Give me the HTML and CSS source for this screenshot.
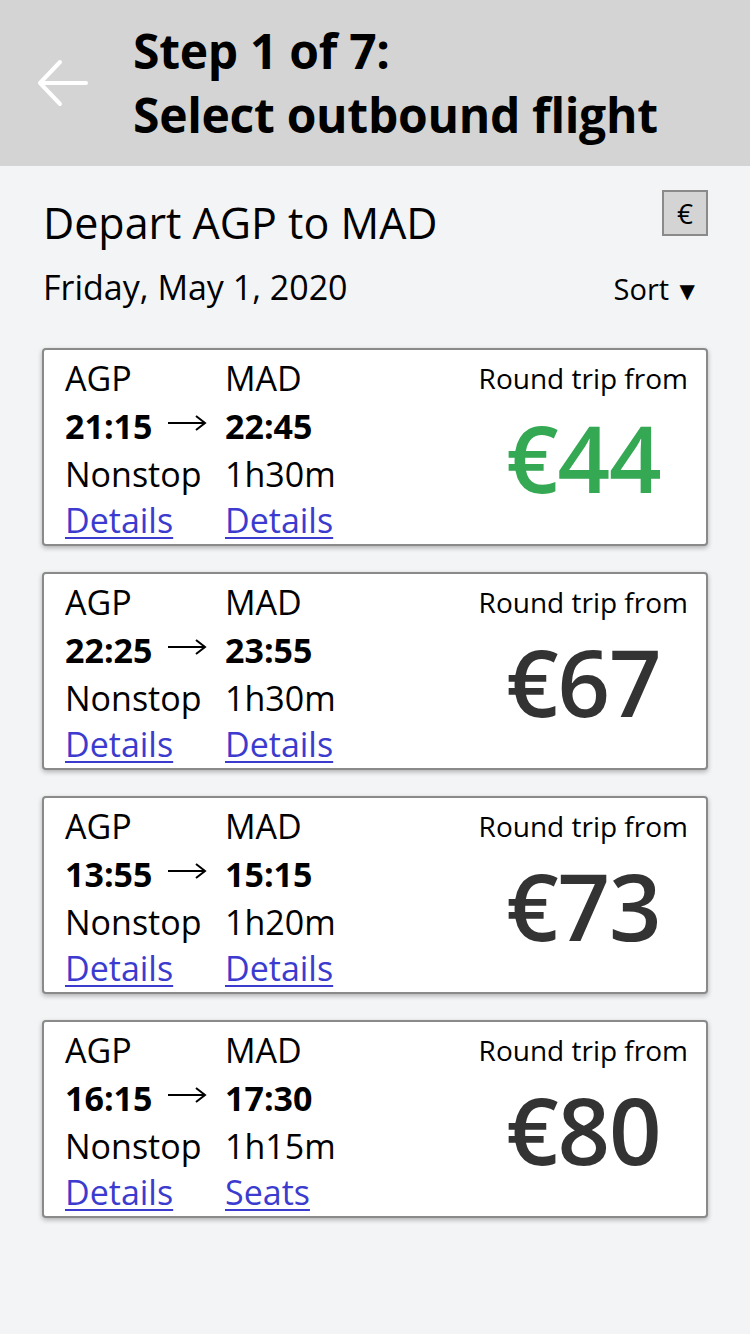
FILE: index.html
```html
<!DOCTYPE html>
<html>
<head>
<meta charset="utf-8">
<link rel="stylesheet" href="styles.css">
</head>
<body>
<header class="topbar">
  <button class="back" aria-label="Back">
    <svg width="54" height="54" viewBox="0 0 54 54"><path d="M50 27H4M24 6L4 27l20 21" fill="none" stroke="#fff" stroke-width="4" stroke-linecap="round" stroke-linejoin="round"/></svg>
  </button>
  <h1 class="title">Step 1 of 7:<br>Select outbound flight</h1>
</header>
<main class="content">
  <div class="route-row">
    <h2 class="route">Depart AGP to MAD</h2>
    <button class="currency">€</button>
  </div>
  <div class="date-row">
    <div class="date">Friday, May 1, 2020</div>
    <div class="sort">Sort <span class="tri">▼</span></div>
  </div>
  <div class="list">
    <div class="card">
      <div class="info">
        <div>AGP</div><div>MAD</div>
        <div class="time">21:15<svg class="arr" width="40" height="20" viewBox="0 0 40 20"><path d="M1 10H38M29 3l9 7-9 7" fill="none" stroke="#000" stroke-width="2"/></svg></div><div class="time">22:45</div>
        <div>Nonstop</div><div>1h30m</div>
        <a href="#">Details</a><a href="#">Details</a>
      </div>
      <div class="price-col">
        <div class="from">Round trip from</div>
        <div class="price best">€44</div>
      </div>
    </div>
    <div class="card">
      <div class="info">
        <div>AGP</div><div>MAD</div>
        <div class="time">22:25<svg class="arr" width="40" height="20" viewBox="0 0 40 20"><path d="M1 10H38M29 3l9 7-9 7" fill="none" stroke="#000" stroke-width="2"/></svg></div><div class="time">23:55</div>
        <div>Nonstop</div><div>1h30m</div>
        <a href="#">Details</a><a href="#">Details</a>
      </div>
      <div class="price-col">
        <div class="from">Round trip from</div>
        <div class="price">€67</div>
      </div>
    </div>
    <div class="card">
      <div class="info">
        <div>AGP</div><div>MAD</div>
        <div class="time">13:55<svg class="arr" width="40" height="20" viewBox="0 0 40 20"><path d="M1 10H38M29 3l9 7-9 7" fill="none" stroke="#000" stroke-width="2"/></svg></div><div class="time">15:15</div>
        <div>Nonstop</div><div>1h20m</div>
        <a href="#">Details</a><a href="#">Details</a>
      </div>
      <div class="price-col">
        <div class="from">Round trip from</div>
        <div class="price">€73</div>
      </div>
    </div>
    <div class="card">
      <div class="info">
        <div>AGP</div><div>MAD</div>
        <div class="time">16:15<svg class="arr" width="40" height="20" viewBox="0 0 40 20"><path d="M1 10H38M29 3l9 7-9 7" fill="none" stroke="#000" stroke-width="2"/></svg></div><div class="time">17:30</div>
        <div>Nonstop</div><div>1h15m</div>
        <a href="#">Details</a><a href="#">Seats</a>
      </div>
      <div class="price-col">
        <div class="from">Round trip from</div>
        <div class="price">€80</div>
      </div>
    </div>
  </div>
</main>
</body>
</html>
```

FILE: styles.css
```css
* { box-sizing: border-box; }
html, body { margin: 0; padding: 0; }
body {
  background: #f3f4f6;
  font-family: "Open Sans", "Noto Sans", sans-serif;
  color: #000;
  width: 750px;
  min-height: 1334px;
}
.topbar {
  height: 166px;
  background: #d4d4d4;
  display: flex;
  align-items: center;
}
.back {
  background: none;
  border: 0;
  padding: 0;
  margin: 0 0 0 35px;
  width: 56px;
  height: 56px;
  display: flex;
  align-items: center;
  justify-content: center;
}
.title {
  margin: 0 0 0 42px;
  font-size: 48px;
  line-height: 64px;
  font-weight: 700;
  letter-spacing: -0.3px;
}
.content {
  padding: 24px 42px 0 42px;
}
.route-row {
  display: flex;
  justify-content: space-between;
  align-items: flex-start;
}
.route {
  margin: 8px 0 0 1px;
  font-size: 43px;
  line-height: 50px;
  font-weight: 400;
}
.currency {
  width: 46px;
  height: 46px;
  background: #d4d4d4;
  border: 2px solid #8a8a8a;
  font-family: "Open Sans", sans-serif;
  font-size: 28px;
  line-height: 1;
  padding: 0;
  color: #000;
}
.date-row {
  display: flex;
  justify-content: space-between;
  align-items: baseline;
  margin-top: 14px;
  height: 86px;
}
.date {
  font-size: 34px;
  line-height: 50px;
  margin-left: 1px;
}
.sort {
  font-size: 29px;
  line-height: 50px;
  margin-right: 13px;
  white-space: nowrap;
}
.tri {
  font-family: "DejaVu Sans", sans-serif;
  font-size: 20px;
  margin-left: 3px;
  vertical-align: 2px;
}
.list {
  display: flex;
  flex-direction: column;
  gap: 26px;
}
.card {
  height: 198px;
  background: #fff;
  border: 2px solid #8a8a8a;
  border-radius: 4px;
  box-shadow: 0 2px 5px rgba(0,0,0,0.28);
  display: flex;
  justify-content: space-between;
  padding: 4px 18px 0 21px;
}
.info {
  display: grid;
  grid-template-columns: 160px auto;
  grid-auto-rows: 48px;
  font-size: 34px;
  line-height: 48px;
}
.time { font-weight: 700; white-space: nowrap; }
.arr { vertical-align: 6px; margin-left: 15px; }
.info a {
  color: #3b3bd0;
  text-decoration: underline;
  text-decoration-thickness: 2px;
  text-underline-offset: 4px;
  line-height: 44px;
}
.price-col {
  display: flex;
  flex-direction: column;
  align-items: center;
}
.from {
  font-size: 28px;
  line-height: 48px;
}
.price {
  font-size: 92px;
  font-weight: 600;
  line-height: 96px;
  color: #333;
  letter-spacing: -1px;
  margin-top: 8px;
}
.price.best { color: #34a853; }
```
